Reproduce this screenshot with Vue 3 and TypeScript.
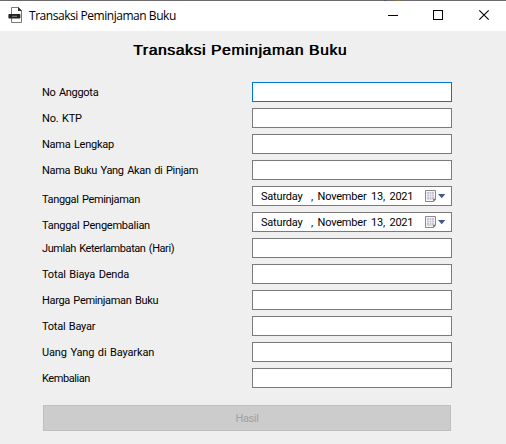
<script setup lang="ts">
import { ref } from 'vue'

interface Field {
  label: string
  kind: 'text' | 'date'
  spacing: number
  shift?: 'low'
}

const title = 'Transaksi Peminjaman Buku'

const fields: Field[] = [
  { label: 'No Anggota', kind: 'text', spacing: -0.3 },
  { label: 'No. KTP', kind: 'text', spacing: -0.2 },
  { label: 'Nama Lengkap', kind: 'text', spacing: -0.25 },
  { label: 'Nama Buku Yang Akan di Pinjam', kind: 'text', spacing: -0.3 },
  { label: 'Tanggal Peminjaman', kind: 'date', spacing: -0.35, shift: 'low' },
  { label: 'Tanggal Pengembalian', kind: 'date', spacing: -0.24, shift: 'low' },
  { label: 'Jumlah Keterlambatan (Hari)', kind: 'text', spacing: -0.43 },
  { label: 'Total Biaya Denda', kind: 'text', spacing: -0.16 },
  { label: 'Harga Peminjaman Buku', kind: 'text', spacing: -0.33 },
  { label: 'Total Bayar', kind: 'text', spacing: -0.25 },
  { label: 'Uang Yang di Bayarkan', kind: 'text', spacing: -0.14 },
  { label: 'Kembalian', kind: 'text', spacing: -0.42 },
]

const values = ref<string[]>(fields.map(() => ''))
const active = ref(0)
</script>

<template>
  <div class="window">
    <div class="edge"></div>
    <header class="titlebar">
      <svg class="app-icon" width="16" height="18" viewBox="0 0 16 18">
        <path d="M3.5 1.5h7l3 3v12h-10z" fill="#fff" stroke="#777" />
        <path d="M10 1v4h4z" fill="#333" />
        <rect x="0.4" y="8" width="12" height="4.6" rx="0.8" fill="#222" />
        <path d="M4 10.3h5" stroke="#888" />
      </svg>
      <span class="caption">{{ title }}</span>
      <svg class="control" width="46" height="28" viewBox="0 0 46 28">
        <path d="M20 13.5h10" stroke="#000" />
      </svg>
      <svg class="control" width="46" height="28" viewBox="0 0 46 28">
        <rect x="19.5" y="8.5" width="9" height="9" fill="none" stroke="#000" />
      </svg>
      <svg class="control" width="46" height="28" viewBox="0 0 46 28">
        <path d="M19.3 8.3l9.4 9.4M28.7 8.3l-9.4 9.4" stroke="#000" stroke-width="1.1" />
      </svg>
    </header>

    <main class="content">
      <h1 class="heading">{{ title }}</h1>
      <form class="form" @submit.prevent>
        <div v-for="(field, i) in fields" :key="field.label" class="row">
          <label class="label" :class="field.shift" :for="`field-${i}`">
            <span :style="{ letterSpacing: field.spacing + 'px' }">{{ field.label }}</span>
          </label>
          <input
            v-if="field.kind === 'text'"
            :id="`field-${i}`"
            v-model="values[i]"
            class="box"
            :class="{ active: active === i }"
            type="text"
            @focus="active = i"
          />
          <div v-else :id="`field-${i}`" class="box date">
            <span class="day">Saturday</span>
            <span class="rest">, November 13, 2021</span>
            <svg class="calendar" width="22" height="14" viewBox="0 0 22 14">
              <path d="M1.5 1.5h10v8.5l-2 2.5h-8z" fill="#f6f4f4" stroke="#8f8888" />
              <path d="M3 3h7v7.5h-7z" fill="#bfc5d2" />
              <path d="M3 5.5h7M3 7.5h7M5.5 3v7M7.5 3v7" stroke="#eceef3" stroke-width="0.7" />
              <path d="M11.5 10h-2v2.5z" fill="#756e70" stroke="#777" stroke-width="0.5" />
              <path d="M14 5h7.4l-3.7 4.2z" fill="#44598a" />
            </svg>
          </div>
        </div>
        <button class="submit" type="submit" disabled>Hasil</button>
      </form>
    </main>
  </div>
</template>

<style>
body {
  margin: 0;
  overflow: hidden;
}
</style>

<style scoped>
.window {
  width: 506px;
  height: 444px;
  background: #efefef;
  color: #000;
  font-family: Roboto, 'Liberation Sans', sans-serif;
  font-size: 11px;
}

.edge {
  height: 1px;
  background: linear-gradient(90deg, #6b696b 384px, #55536b 384px 386px, #6b696b 386px 395px, #8a7045 395px 401px, #6b696b 401px);
}

.titlebar {
  display: flex;
  align-items: flex-start;
  height: 30px;
  background: #fff;
}

.app-icon {
  flex: none;
  margin: 5px 5px 0 8px;
}

.caption {
  flex: 1;
  padding-top: 6px;
  font-family: 'Open Sans', sans-serif;
  font-size: 12px;
  line-height: 18px;
  letter-spacing: -0.46px;
  white-space: nowrap;
}

.control {
  flex: none;
  margin-top: 1px;
}

.content {
  display: flex;
  flex-direction: column;
}

.heading {
  margin: 10px 0 0 133px;
  font-family: 'Liberation Sans', sans-serif;
  font-size: 15.5px;
  font-weight: 400;
  line-height: 18px;
  letter-spacing: 0.69px;
  text-shadow: 0.7px 0 0 #000;
  white-space: nowrap;
}

.form {
  display: flex;
  flex-direction: column;
  gap: 6px;
  margin: 23px 54px 0 42px;
}

.row {
  display: grid;
  grid-template-columns: 210px 200px;
  height: 20px;
}

.label {
  padding-top: 3px;
  line-height: 16px;
  white-space: nowrap;
  word-spacing: 1px;
}

.label.low {
  padding-top: 6px;
}

.box {
  box-sizing: border-box;
  width: 200px;
  height: 20px;
  padding: 0 4px;
  border: 1px solid #7a7a7a;
  border-radius: 0;
  outline: none;
  background: #fff;
  font: inherit;
}

.box.active {
  border-color: #0078d7;
}

.date {
  display: flex;
  align-items: center;
  padding: 0 5px 0 8px;
  white-space: nowrap;
  letter-spacing: -0.2px;
  word-spacing: 2px;
}

.day {
  width: 50px;
}

.rest {
  flex: 1;
}

.calendar {
  flex: none;
}

.submit {
  width: 408px;
  height: 26px;
  margin: 11px 0 0 1px;
  padding: 0;
  border: 1px solid #bfbfbf;
  background: #ccc;
  color: #a0a0a4;
  font: inherit;
  letter-spacing: -0.4px;
}
</style>
